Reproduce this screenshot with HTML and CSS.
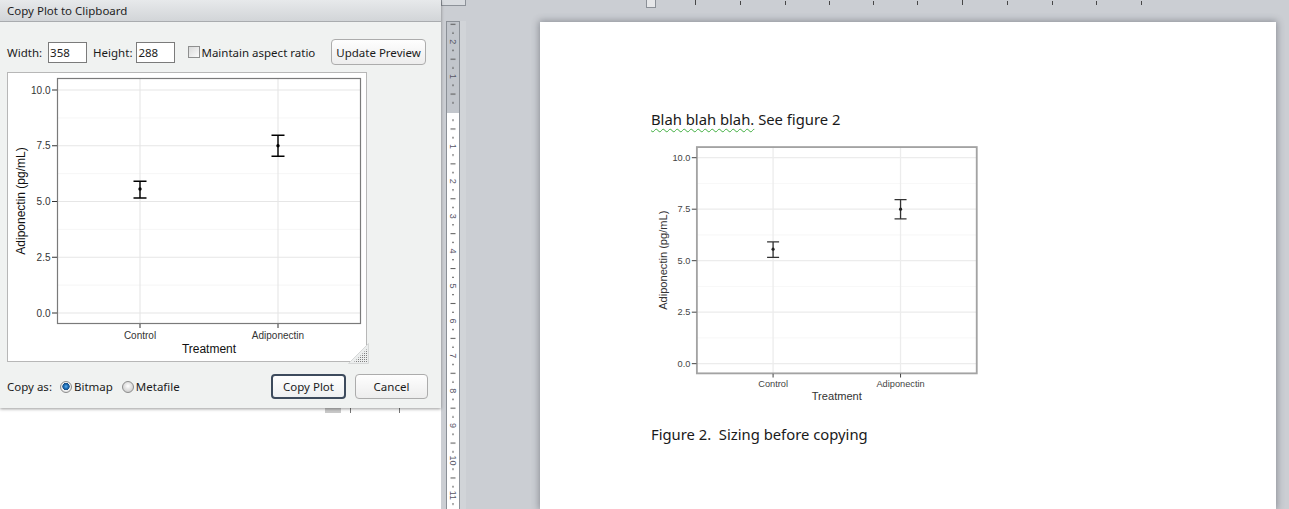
FILE: index.html
```html
<!DOCTYPE html>
<html>
<head>
<meta charset="utf-8">
<title>Copy Plot to Clipboard</title>
<link rel="stylesheet" href="styles.css">
</head>
<body>
<div class="screen">
  <div class="leftpane">
    <div class="dialog">
      <div class="titlebar">Copy Plot to Clipboard</div>
      <div class="dlg-body">
        <div class="row-top">
          <span class="lbl">Width:</span>
          <span class="field">358</span>
          <span class="lbl lbl-h">Height:</span>
          <span class="field field-h">288</span>
          <span class="check"></span>
          <span class="lbl lbl-chk">Maintain aspect ratio</span>
          <span class="btn btn-update">Update Preview</span>
        </div>
        <div class="preview">
          <svg class="plot" viewBox="0 0 358 288" width="358" height="288">
            <rect class="p-bg" x="49" y="5" width="304" height="246"/>
            <path class="p-minor" d="M49 44.9H353M49 100.6H353M49 156.4H353M49 212.1H353"/>
            <path class="p-major" d="M49 17H353M49 72.75H353M49 128.5H353M49 184.25H353M49 240H353M132 5V251M270 5V251"/>
            <rect class="p-border" x="49.5" y="5.5" width="303" height="245"/>
            <path class="p-ticks" d="M44 17H49M44 72.75H49M44 128.5H49M44 184.25H49M44 240H49M132 251V255M270 251V255"/>
            <g class="p-ylab">
              <text x="42.5" y="20.5">10.0</text>
              <text x="42.5" y="76.25">7.5</text>
              <text x="42.5" y="132">5.0</text>
              <text x="42.5" y="187.75">2.5</text>
              <text x="42.5" y="243.5">0.0</text>
            </g>
            <g class="p-xlab">
              <text x="132" y="265.5">Control</text>
              <text x="270" y="265.5">Adiponectin</text>
            </g>
            <text class="p-title" x="201" y="279.5">Treatment</text>
            <text class="p-title" transform="translate(17,128) rotate(-90)">Adiponectin (pg/mL)</text>
            <path class="p-bars" d="M125.5 108.2H138.5M132 108.2V125M125.5 125H138.5M263.5 62.3H276.5M270 62.3V83.2M263.5 83.2H276.5"/>
            <circle class="p-pt" cx="132" cy="116" r="1.7"/>
            <circle class="p-pt" cx="270" cy="72.75" r="1.7"/>
          </svg>
          <svg class="grip" width="21" height="21" viewBox="0 0 21 21">
            <defs>
              <pattern id="gripdots" width="2" height="2" patternUnits="userSpaceOnUse">
                <rect class="grip-dot" width="1" height="1"/>
              </pattern>
            </defs>
            <polygon class="grip-bg" points="0.5,20.5 20.5,0.5 20.5,20.5"/>
            <polygon points="6,19 19,6 19,19" fill="url(#gripdots)"/>
          </svg>
        </div>
        <div class="row-bottom">
          <span class="lbl">Copy as:</span>
          <span class="radio radio-on"></span>
          <span class="lbl lbl-radio">Bitmap</span>
          <span class="radio radio-off"></span>
          <span class="lbl lbl-radio">Metafile</span>
          <span class="btn btn-default">Copy Plot</span>
          <span class="btn btn-cancel">Cancel</span>
        </div>
      </div>
    </div>
    <div class="under">
      <span class="frag frag-a"></span>
      <span class="frag frag-b"></span>
      <span class="frag frag-c"></span>
    </div>
  </div>

  <div class="workspace">
    <div class="vcol">
      <div class="vtopbox"></div>
      <div class="vruler-wrap">
        <svg class="vruler" width="14" height="488" viewBox="0 0 14 488">
          <defs>
            <pattern id="vmarks" x="0" y="90.5" width="14" height="34.9" patternUnits="userSpaceOnUse">
              <rect class="vr-mark" x="6" y="8.2" width="2" height="1"/>
              <rect class="vr-mark" x="4.5" y="17" width="5" height="1"/>
              <rect class="vr-mark" x="6" y="25.7" width="2" height="1"/>
            </pattern>
          </defs>
          <rect class="vr-margin" x="0" y="0" width="14" height="92"/>
          <rect class="vr-white" x="0" y="92" width="14" height="396"/>
          <rect x="0" y="0" width="14" height="488" fill="url(#vmarks)"/>
          <rect class="vr-border" x="0.5" y="0.5" width="13" height="490"/>
          <g class="vr-num">
            <text transform="translate(4,20.7) rotate(90)">2</text>
            <text transform="translate(4,55.6) rotate(90)">1</text>
            <text transform="translate(4,125.4) rotate(90)">1</text>
            <text transform="translate(4,160.3) rotate(90)">2</text>
            <text transform="translate(4,195.2) rotate(90)">3</text>
            <text transform="translate(4,230.1) rotate(90)">4</text>
            <text transform="translate(4,265) rotate(90)">5</text>
            <text transform="translate(4,299.9) rotate(90)">6</text>
            <text transform="translate(4,334.8) rotate(90)">7</text>
            <text transform="translate(4,369.7) rotate(90)">8</text>
            <text transform="translate(4,404.6) rotate(90)">9</text>
            <text transform="translate(4,439.5) rotate(90)">10</text>
            <text transform="translate(4,474.4) rotate(90)">11</text>
          </g>
        </svg>
        <span class="vstrip"></span>
      </div>
    </div>

    <div class="docarea">
      <svg class="hruler" width="821" height="22" viewBox="0 0 821 22">
        <rect class="hr-box" x="178.5" y="-1.5" width="9" height="9"/>
        <path class="hr-tick" d="M227.5 0V5M272.5 1V5M317.5 1V5M361.5 1V5M405.5 1V5M449.5 1V5M494.5 0V5M539.5 1V5M584.5 1V5M628.5 1V5M673.5 1V5"/>
      </svg>
      <div class="page">
        <p class="doc-text"><span class="grammar">Blah blah blah.</span> See figure 2</p>
        <svg class="plot docfig" viewBox="0 0 358 288" width="331" height="266">
          <rect class="p-bg" x="49" y="5" width="304" height="246"/>
          <path class="p-minor" d="M49 44.9H353M49 100.6H353M49 156.4H353M49 212.1H353"/>
          <path class="p-major" d="M49 17H353M49 72.75H353M49 128.5H353M49 184.25H353M49 240H353M132 5V251M270 5V251"/>
          <rect class="p-border" x="49.5" y="5.5" width="303" height="245"/>
          <path class="p-ticks" d="M44 17H49M44 72.75H49M44 128.5H49M44 184.25H49M44 240H49M132 251V255M270 251V255"/>
          <g class="p-ylab">
            <text x="42.5" y="20.5">10.0</text>
            <text x="42.5" y="76.25">7.5</text>
            <text x="42.5" y="132">5.0</text>
            <text x="42.5" y="187.75">2.5</text>
            <text x="42.5" y="243.5">0.0</text>
          </g>
          <g class="p-xlab">
            <text x="132" y="265.5">Control</text>
            <text x="270" y="265.5">Adiponectin</text>
          </g>
          <text class="p-title" x="201" y="279.5">Treatment</text>
          <text class="p-title" transform="translate(17,128) rotate(-90)">Adiponectin (pg/mL)</text>
          <path class="p-bars" d="M125.5 108.2H138.5M132 108.2V125M125.5 125H138.5M263.5 62.3H276.5M270 62.3V83.2M263.5 83.2H276.5"/>
          <circle class="p-pt" cx="132" cy="116" r="1.7"/>
          <circle class="p-pt" cx="270" cy="72.75" r="1.7"/>
        </svg>
        <p class="doc-text caption">Figure 2.&nbsp; Sizing before copying</p>
      </div>
    </div>
  </div>
</div>
</body>
</html>
```

FILE: styles.css
```css
* { box-sizing: border-box; }
html, body { margin: 0; padding: 0; }
body {
  width: 1289px;
  height: 509px;
  overflow: hidden;
  background: #fff;
  font-family: "Noto Sans", "Open Sans", sans-serif;
}
.screen { display: flex; width: 1289px; height: 509px; }

/* ---------- left: RStudio dialog ---------- */
.leftpane {
  width: 441px;
  flex: none;
  display: flex;
  flex-direction: column;
  background: #fff;
}
.dialog {
  height: 408px;
  flex: none;
  display: flex;
  flex-direction: column;
  background: #f0f2f1;
  box-shadow: 0 1px 3px rgba(0, 0, 0, 0.4);
  position: relative;
  z-index: 2;
  font-size: 11.5px;
  color: #1b1b1b;
}
.titlebar {
  height: 22px;
  flex: none;
  padding-left: 7px;
  line-height: 21px;
  background: linear-gradient(#e7e9eb, #d2d5d8);
  border-bottom: 1px solid #a9acaf;
  color: #1e1e1e;
}
.dlg-body {
  flex: 1;
  display: flex;
  flex-direction: column;
  padding-left: 7px;
}
.row-top {
  display: flex;
  align-items: center;
  height: 26px;
  margin-top: 17px;
}
.lbl { white-space: nowrap; }
.field {
  width: 39px;
  height: 21px;
  margin-left: 6px;
  padding-left: 1px;
  line-height: 19px;
  border: 1px solid #7b7b7b;
  background: #fff;
}
.field-h { margin-left: 4px; }
.lbl-h { margin-left: 6px; }
.check {
  width: 12px;
  height: 12px;
  margin-left: 13px;
  border: 1px solid #8e8f8f;
  background: linear-gradient(135deg, #d9dada, #fbfbfb);
}
.lbl-chk { margin-left: 1px; }
.btn {
  display: flex;
  align-items: center;
  justify-content: center;
  border: 1px solid #acacac;
  border-radius: 4px;
  background: linear-gradient(#fefefe, #ededed);
  white-space: nowrap;
}
.btn-update {
  width: 95px;
  height: 26px;
  margin-left: auto;
  margin-right: 15px;
}
.preview {
  width: 360px;
  height: 290px;
  margin-top: 7px;
  border: 1px solid #b7b7b7;
  background: #fff;
  position: relative;
}
.plot { display: block; }
.grip {
  position: absolute;
  right: -3px;
  bottom: -3px;
  display: block;
}
.grip-bg { fill: #eceeee; stroke: #d6d8d8; stroke-width: 1; }
.grip-dot { fill: #7f7f7f; }

.row-bottom {
  display: flex;
  align-items: center;
  height: 25px;
  margin-top: 12px;
}
.radio {
  width: 12px;
  height: 12px;
  border-radius: 50%;
  border: 1px solid #8c8c8c;
  flex: none;
}
.radio-on {
  margin-left: 8px;
  background: radial-gradient(circle at 50% 45%, #5fb0ee 0, #1f6fb8 2px, #184f86 3.4px, #f4f4f4 3.9px, #d9d9d9 6px);
}
.radio-off {
  margin-left: 9px;
  background: radial-gradient(circle at 50% 40%, #ffffff 0, #e6e6e6 3px, #cfcfcf 6px);
}
.lbl-radio { margin-left: 2px; }
.btn-default {
  width: 75px;
  height: 25px;
  margin-left: auto;
  border: 2px solid #3d4b5d;
  background: linear-gradient(#ffffff, #eef0f2);
}
.btn-cancel {
  width: 73px;
  height: 25px;
  margin-left: 9px;
  margin-right: 13px;
}

.under {
  height: 6px;
  display: flex;
  align-items: flex-start;
}
.frag { display: block; height: 5px; }
.frag-a { width: 16px; margin-left: 325px; background: #c9c9c9; }
.frag-b { width: 1px; margin-left: 9px; background: #777; }
.frag-c { width: 1px; margin-left: 48px; background: #777; }

/* ---------- plot (ggplot style) ---------- */
.p-bg { fill: #fff; }
.p-minor { stroke: #f4f4f4; stroke-width: 0.8; fill: none; }
.p-major { stroke: #e6e6e6; stroke-width: 1.1; fill: none; }
.p-border { fill: none; stroke: #7a7a7a; stroke-width: 1.2; }
.p-ticks { stroke: #333; stroke-width: 1; fill: none; }
.p-ylab text {
  font-family: "Liberation Sans", Arial, sans-serif;
  font-size: 10px;
  fill: #333;
  text-anchor: end;
}
.p-xlab text {
  font-family: "Liberation Sans", Arial, sans-serif;
  font-size: 10px;
  fill: #333;
  text-anchor: middle;
}
.p-title {
  font-family: "Liberation Sans", Arial, sans-serif;
  font-size: 12px;
  fill: #111;
  text-anchor: middle;
}
.p-bars { stroke: #000; stroke-width: 1.4; fill: none; }
.p-pt { fill: #000; }

.docfig .p-border { stroke: #a3a3a3; stroke-width: 2; }
.docfig .p-major { stroke: #ececec; stroke-width: 1.4; }
.docfig .p-ylab text, .docfig .p-xlab text { fill: #444; }
.docfig .p-title { fill: #333; }
.docfig .p-bars { stroke: #333; }
.docfig .p-pt { fill: #222; }

/* ---------- right: Word workspace ---------- */
.workspace {
  flex: 1;
  display: flex;
  background: #cbced3;
}
.vcol {
  width: 27px;
  flex: none;
  display: flex;
  flex-direction: column;
}
.vtopbox {
  width: 25px;
  height: 6px;
  flex: none;
  border: 1px solid #8d9299;
  border-top: none;
  background: #d9dce0;
}
.vruler-wrap {
  flex: 1;
  display: flex;
  margin-top: 15px;
  margin-left: 5px;
}
.vruler { display: block; flex: none; }
.vstrip { width: 6px; background: #d1d4d8; }
.vr-margin { fill: #c2c6cc; }
.vr-white { fill: #fff; }
.vr-border { fill: none; stroke: #8b9097; stroke-width: 1; }
.vr-mark { fill: #555; }
.vr-num text {
  font-family: "Liberation Sans", Arial, sans-serif;
  font-size: 9px;
  fill: #555566;
  text-anchor: middle;
}

.docarea {
  flex: 1;
  display: flex;
  flex-direction: column;
}
.hruler { display: block; flex: none; }
.hr-box { fill: #e6e7e9; stroke: #8b9097; stroke-width: 1; }
.hr-tick { stroke: #474747; stroke-width: 1; fill: none; }

.page {
  flex: 1;
  width: 736px;
  margin-left: 72px;
  padding: 87px 0 0 111px;
  background: #fff;
  box-shadow: 0 0 7px 1px rgba(60, 65, 75, 0.45);
}
.doc-text {
  margin: 0;
  font-family: "Noto Sans", "Open Sans", sans-serif;
  font-size: 14.8px;
  line-height: 20px;
  color: #1a1a1a;
  white-space: nowrap;
}
.grammar {
  text-decoration: underline wavy #3fae3f;
  text-decoration-thickness: 1px;
  text-underline-offset: 3px;
}
.docfig { margin-top: 13px; }
.caption { margin-top: 16px; }
```
